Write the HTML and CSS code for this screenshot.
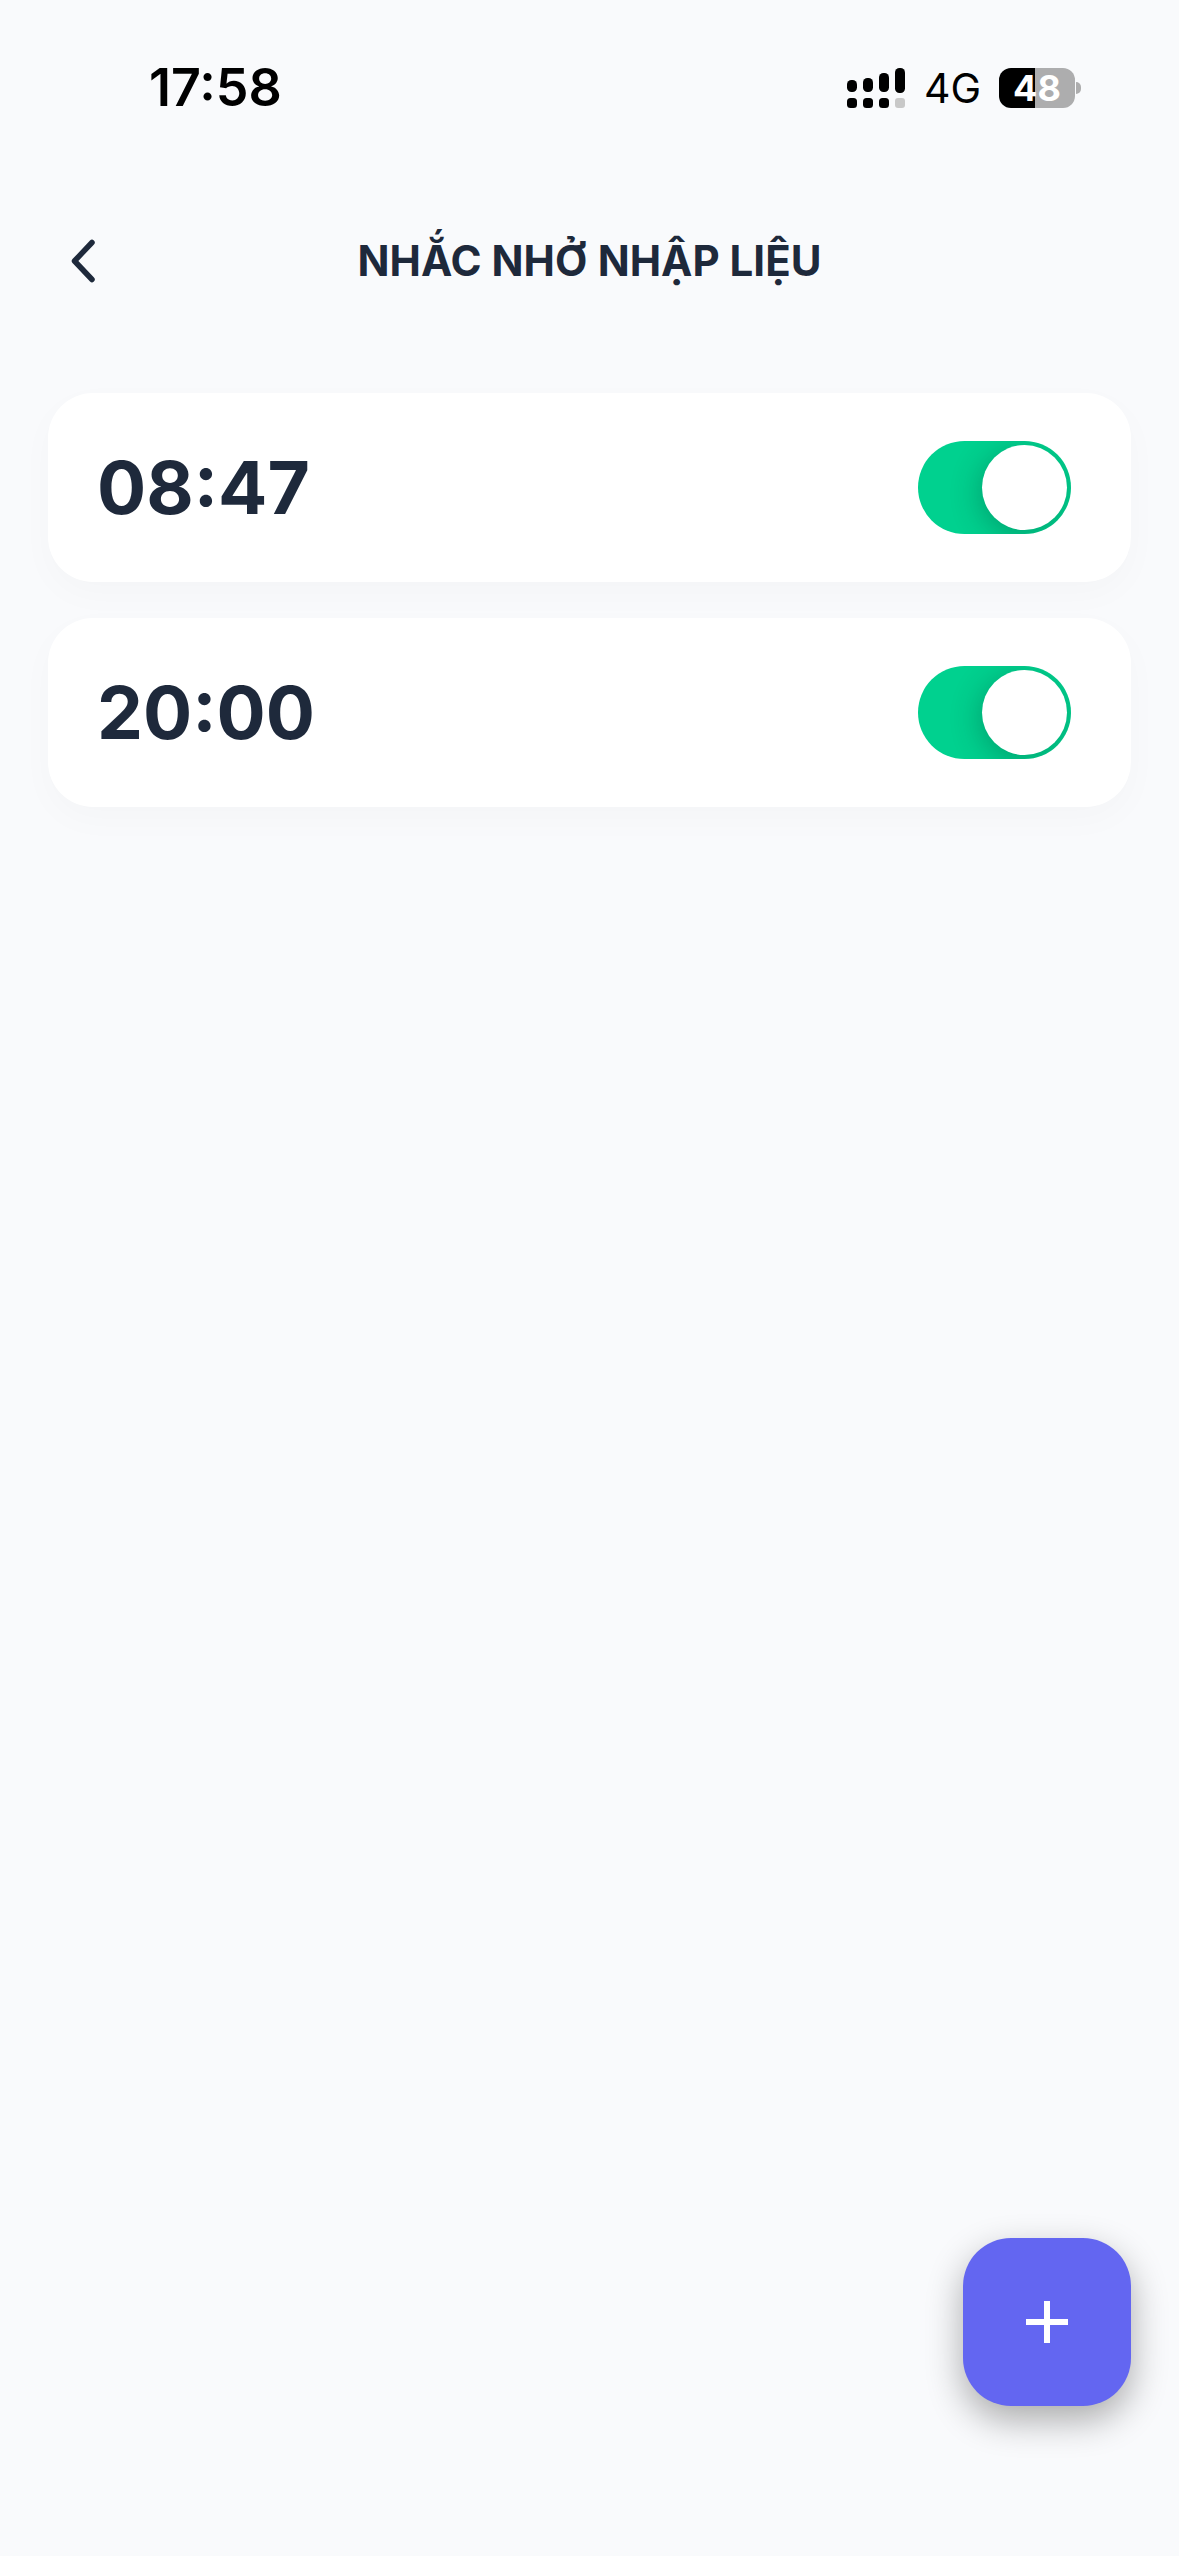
FILE: index.html
```html
<!DOCTYPE html>
<html lang="vi">
<head>
<meta charset="utf-8">
<title>Nhắc nhở nhập liệu</title>
<link rel="stylesheet" href="styles.css">
</head>
<body>
<main class="screen">
  <div class="status">
    <span class="clock">17:58</span>
    <div class="status-right">
      <svg class="signal" width="58" height="40" viewBox="0 0 58 40">
        <rect x="0" y="12" width="10" height="12" rx="4.5"/>
        <rect x="16" y="10" width="10" height="14" rx="4.5"/>
        <rect x="32" y="5" width="10" height="19" rx="4.5"/>
        <rect x="48" y="0" width="10" height="25" rx="4.5"/>
        <rect x="0" y="30" width="10" height="10" rx="3.5"/>
        <rect x="16" y="30" width="10" height="10" rx="3.5"/>
        <rect x="32" y="30" width="10" height="10" rx="3.5"/>
        <rect class="signal-off" x="48" y="30" width="10" height="10" rx="3"/>
      </svg>
      <span class="network">4G</span>
      <div class="battery"><span>48</span></div>
      <span class="battery-nub"></span>
    </div>
  </div>
  <header class="header">
    <svg class="back" width="24" height="44" viewBox="0 0 24 44">
      <path d="M21 3.5 L3.5 22 L21 40.500" fill="none"/>
    </svg>
    <h1 class="title">NHẮC NHỞ NHẬP LIỆU</h1>
  </header>
  <section class="list">
    <article class="card">
      <span class="time">08:47</span>
      <div class="toggle"><span class="thumb"></span></div>
    </article>
    <article class="card">
      <span class="time">20:00</span>
      <div class="toggle"><span class="thumb"></span></div>
    </article>
  </section>
  <button class="fab" type="button" aria-label="Thêm">
    <svg width="42" height="42" viewBox="0 0 42 42"><path d="M21 0V42M0 21H42"/></svg>
  </button>
</main>
</body>
</html>
```
FILE: styles.css
```css
* { box-sizing: border-box; }
html, body { margin: 0; padding: 0; }
body { background: #f8fafc; font-family: "Inter", "Liberation Sans", sans-serif; }
.screen { position: relative; width: 1179px; height: 2556px; overflow: hidden; background: #f9fafc; }

.status { height: 176px; padding: 0 98px 0 149px; display: flex; align-items: center; justify-content: space-between; color: #000; }
.clock { font-size: 52px; font-weight: 600; line-height: 1; }
.status-right { display: flex; align-items: center; }
.signal { display: block; fill: #000; margin-right: 19px; }
.signal-off { fill: #c8c8c8; }
.network { font-size: 41px; font-weight: 400; line-height: 1; margin-right: 18px; }
.battery { width: 76px; height: 40px; border-radius: 12px; background: linear-gradient(90deg, #000 0 36px, #adadae 36px); display: flex; align-items: center; justify-content: center; color: #fff; font-size: 36px; font-weight: 700; line-height: 1; }
.battery-nub { width: 5px; height: 12px; margin-left: 1px; border-radius: 0 6px 6px 0; background: #adadae; }

.header { height: 170px; padding: 0 48px 0 71px; display: grid; grid-template-columns: 1fr auto 1fr; align-items: center; margin-right: 23px; }
.back { display: block; stroke: #1e293b; stroke-width: 5.5; stroke-linecap: round; stroke-linejoin: round; }
.title { margin: 0; font-size: 42px; font-weight: 700; color: #1e293b; line-height: 1; white-space: nowrap; }

.list { padding: 47px 48px 0; display: flex; flex-direction: column; gap: 36px; }
.card { height: 189px; border-radius: 45px; background: #fff; box-shadow: 0 12px 36px rgba(15, 23, 42, 0.025); padding: 0 60px 0 49px; display: flex; align-items: center; justify-content: space-between; }
.time { font-size: 73px; font-weight: 700; color: #1e293b; line-height: 1; }
.toggle { width: 153px; height: 93px; border-radius: 47px; background: #00d18f; padding: 4px; display: flex; justify-content: flex-end; align-items: center; overflow: hidden; }
.thumb { width: 85px; height: 85px; border-radius: 50%; background: #fff; box-shadow: -2px 6px 30px rgba(0, 60, 40, 0.32); }

.fab { position: absolute; left: 963px; top: 2238px; width: 168px; height: 168px; border: 0; padding: 0; border-radius: 48px; background: #6366f1; box-shadow: 0 14px 36px rgba(0, 0, 0, 0.32); display: flex; align-items: center; justify-content: center; }
.fab svg { display: block; stroke: #fff; stroke-width: 6; }
```
